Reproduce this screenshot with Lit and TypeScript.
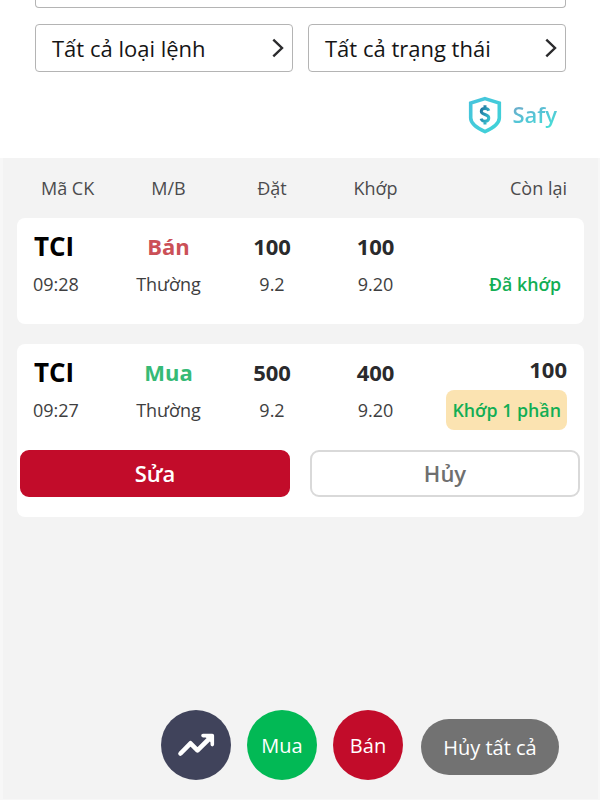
import { LitElement, html, css, svg, nothing } from 'lit';
import { customElement, property } from 'lit/decorators.js';
import { classMap } from 'lit/directives/class-map.js';

interface Order {
  symbol: string;
  time: string;
  side: 'buy' | 'sell';
  type: string;
  quantity: string;
  price: string;
  matched: string;
  matchedPrice: string;
  remaining: string;
  status: string;
  partial: boolean;
}

const ORDERS: Order[] = [
  {
    symbol: 'TCI', time: '09:28', side: 'sell', type: 'Thường',
    quantity: '100', price: '9.2', matched: '100', matchedPrice: '9.20',
    remaining: '', status: 'Đã khớp', partial: false,
  },
  {
    symbol: 'TCI', time: '09:27', side: 'buy', type: 'Thường',
    quantity: '500', price: '9.2', matched: '400', matchedPrice: '9.20',
    remaining: '100', status: 'Khớp 1 phần', partial: true,
  },
];

@customElement('filter-select')
export class FilterSelect extends LitElement {
  static styles = css`
    :host {
      display: flex;
      align-items: center;
      justify-content: space-between;
      box-sizing: border-box;
      height: 48px;
      padding: 0 7px 1px 16px;
      border: 1px solid #b4b4b4;
      border-radius: 4px;
      color: #151515;
      font-size: 22px;
    }
    .chevron {
      display: block;
      width: 14px;
      height: 20px;
    }
  `;

  @property({ type: String }) label = '';

  render() {
    return html`
      <span>${this.label}</span>
      <svg class="chevron" viewBox="0 0 14 20" fill="none" stroke="#2b2b2d" stroke-width="2.4">
        <path d="M2.3 1.6 11 10 2.3 18.4" />
      </svg>
    `;
  }
}

@customElement('order-card')
export class OrderCard extends LitElement {
  static styles = css`
    :host {
      display: block;
      box-sizing: border-box;
      background: #fff;
      border-radius: 8px;
      padding: 10px 3px 20px;
    }
    .grid {
      display: grid;
      grid-template-columns: 83.75px repeat(3, 103.5px) 1fr;
      grid-template-rows: 36px 40px;
      align-items: center;
      padding: 0 14px 0 13px;
      text-align: center;
      color: #3e3e40;
      font-size: 18px;
    }
    .symbol {
      text-align: left;
      padding-left: 1px;
      font-size: 26px;
      font-weight: 700;
      line-height: 36px;
      color: #000;
    }
    .time {
      text-align: left;
    }
    .side,
    .amount {
      font-size: 22px;
      font-weight: 700;
      line-height: 36px;
    }
    .sell {
      color: #cb5057;
    }
    .buy {
      color: #36ba76;
    }
    .amount {
      color: #2a2a2c;
    }
    .remaining {
      text-align: right;
      line-height: 30px;
      padding-bottom: 6px;
    }
    .status {
      justify-self: end;
      box-sizing: border-box;
      height: 40px;
      line-height: 40px;
      padding: 0 6px;
      border-radius: 8px;
      color: #12ae54;
      font-size: 17.8px;
      font-weight: 600;
      white-space: nowrap;
    }
    .partial {
      background: #fbe3b1;
    }
    .actions {
      display: grid;
      grid-template-columns: 1fr 1fr;
      gap: 20px;
      padding: 20px 1px 0 0;
    }
    button {
      box-sizing: border-box;
      height: 47px;
      padding: 0 0 2px;
      border: 2px solid #d9d9d9;
      border-radius: 9px;
      background: #fff;
      color: #6f6f6f;
      font: 600 22px 'Open Sans', sans-serif;
    }
    .edit {
      border-color: #c20c2a;
      background: #c20c2a;
      color: #fff;
    }
  `;

  @property({ attribute: false }) order!: Order;

  render() {
    const o = this.order;
    return html`
      <div class="grid">
        <span class="symbol">${o.symbol}</span>
        <span class="side ${o.side}">${o.side === 'buy' ? 'Mua' : 'Bán'}</span>
        <span class="amount">${o.quantity}</span>
        <span class="amount">${o.matched}</span>
        <span class="amount remaining">${o.remaining}</span>
        <span class="time">${o.time}</span>
        <span>${o.type}</span>
        <span>${o.price}</span>
        <span>${o.matchedPrice}</span>
        <span class=${classMap({ status: true, partial: o.partial })}>${o.status}</span>
      </div>
      ${o.partial
        ? html`
            <div class="actions">
              <button class="edit">Sửa</button>
              <button>Hủy</button>
            </div>
          `
        : nothing}
    `;
  }
}

@customElement('app-root')
export class AppRoot extends LitElement {
  static styles = css`
    :host {
      display: flex;
      flex-direction: column;
      position: relative;
      box-sizing: border-box;
      height: 800px;
      overflow: hidden;
      background: #fff;
      font-family: 'Open Sans', sans-serif;
    }
    .filters {
      display: grid;
      grid-template-columns: 258px 258px;
      gap: 16px 15px;
      padding: 0 34px 0 35px;
    }
    .search {
      grid-column: 1 / -1;
      box-sizing: border-box;
      height: 8px;
      border: 1px solid #b4b4b4;
      border-top: 0;
      border-radius: 0 0 4px 4px;
    }
    .brand {
      display: flex;
      align-items: center;
      justify-content: flex-end;
      gap: 10px;
      height: 86px;
      padding-right: 43px;
      font-size: 22px;
      font-weight: 600;
    }
    .shield {
      display: block;
      width: 34px;
      height: 38px;
    }
    .name {
      padding-bottom: 2px;
      background: linear-gradient(160deg, #6fa9c9 15%, #55c4d6 50%, #48dcd6 85%);
      -webkit-background-clip: text;
      background-clip: text;
      color: transparent;
    }
    .orders {
      flex: 1;
      padding: 0 14px;
      border: solid #f7f7f7;
      border-width: 0 2px 1px 3px;
      background: #f3f3f3;
    }
    .head {
      display: grid;
      grid-template-columns: 83.75px repeat(3, 103.5px) 1fr;
      height: 60px;
      line-height: 60px;
      padding: 0 17px 0 16px;
      text-align: center;
      color: #4b4b4d;
      font-size: 18px;
    }
    .head :first-child {
      text-align: left;
      padding-left: 8px;
    }
    .head :last-child {
      text-align: right;
    }
    .cards {
      display: flex;
      flex-direction: column;
      gap: 20px;
    }
    .fabs {
      position: absolute;
      right: 41px;
      bottom: 20px;
      display: flex;
      align-items: flex-start;
      gap: 16px;
    }
    .fab {
      display: flex;
      align-items: center;
      justify-content: center;
      width: 70px;
      height: 70px;
      border-radius: 50%;
      color: #fff;
      font-size: 20px;
    }
    .trend {
      background: #40435b;
    }
    .trend svg {
      width: 40px;
      height: 26px;
    }
    .buy {
      background: #02b955;
    }
    .sell {
      background: #c20c2a;
    }
    .all {
      width: 138px;
      height: 56px;
      margin: 9px 0 0 2px;
      border-radius: 28px;
      background: #727272;
    }
  `;

  private shieldIcon() {
    return svg`
      <svg class="shield" viewBox="0 0 34 38" fill="none">
        <defs>
          <linearGradient id="edge" x1="0" y1="0" x2="1" y2="1">
            <stop offset="0" stop-color="#47c3dc" />
            <stop offset="1" stop-color="#3fd3d8" />
          </linearGradient>
          <linearGradient id="coin" x1="0" y1="0" x2="1" y2="1">
            <stop offset="0" stop-color="#1f6f9c" />
            <stop offset="1" stop-color="#38c8d4" />
          </linearGradient>
        </defs>
        <path d="M17 2.6 31.3 7V22C31.3 27.500 25.500 31.800 17 35.600 8.500 31.800 2.700 27.500 2.700 22V7Z"
          stroke="url(#edge)" stroke-width="3.6" />
        <path d="M20.800 14.800C20.200 13.200 19 12.500 17 12.500 14.600 12.500 13.300 13.700 13.300 15.300 13.300 19.400 20.800 17.600 20.800 22 20.800 24 19.300 25.200 17 25.200 14.900 25.200 13.600 24.300 13.100 22.600M17 9.200V12.500M17 25.200V28.500"
          stroke="url(#coin)" stroke-width="3" />
      </svg>
    `;
  }

  render() {
    return html`
      <div class="filters">
        <div class="search"></div>
        <filter-select label="Tất cả loại lệnh"></filter-select>
        <filter-select label="Tất cả trạng thái"></filter-select>
      </div>
      <div class="brand">${this.shieldIcon()}<span class="name">Safy</span></div>
      <div class="orders">
        <div class="head">
          <span>Mã CK</span><span>M/B</span><span>Đặt</span><span>Khớp</span><span>Còn lại</span>
        </div>
        <div class="cards">
          ${ORDERS.map((order) => html`<order-card .order=${order}></order-card>`)}
        </div>
      </div>
      <div class="fabs">
        <div class="fab trend">
          <svg viewBox="0 0 40 26" fill="none" stroke="#fff" stroke-width="4.6"
            stroke-linecap="round" stroke-linejoin="round">
            <path d="M4.500 21.500 14.500 11.300 21.500 18.300 35 5" />
            <path d="M27 3.600H36.300V12.600" stroke-width="3.600" />
            <path d="M28 3.500H36.500V12Z" fill="#fff" stroke="none" />
          </svg>
        </div>
        <div class="fab buy">Mua</div>
        <div class="fab sell">Bán</div>
        <div class="fab all">Hủy tất cả</div>
      </div>
    `;
  }
}
